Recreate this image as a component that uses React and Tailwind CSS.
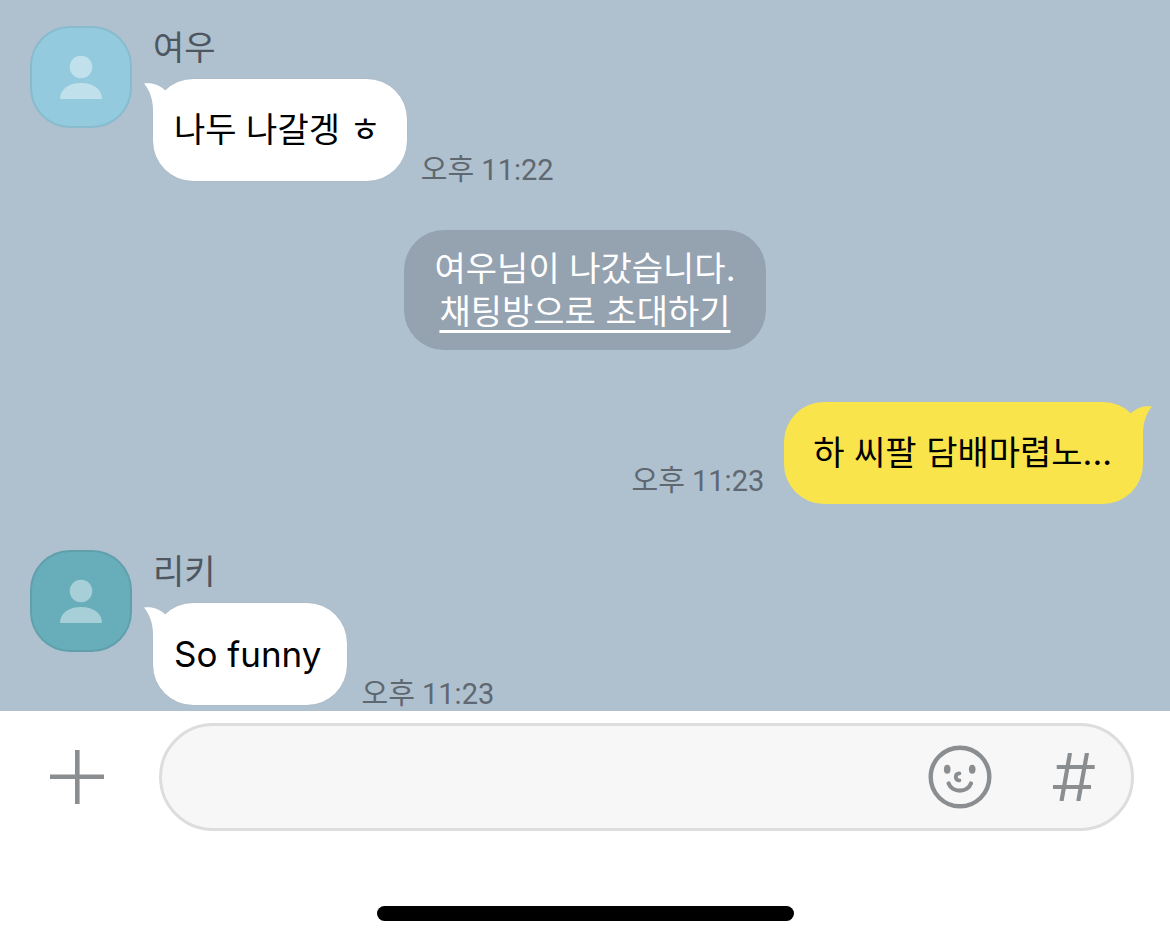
import clsx from 'clsx';

const messages = [
  { id: 1, type: 'incoming', name: '여우', text: '나두 나갈겡 ㅎ', time: '오후 11:22', avatar: 'bg-[#93cade]' },
  { id: 2, type: 'system', text: '여우님이 나갔습니다.', link: '채팅방으로 초대하기' },
  { id: 3, type: 'outgoing', text: '하 씨팔 담배마렵노...', time: '오후 11:23' },
  { id: 4, type: 'incoming', name: '리키', text: 'So funny', lang: 'en', time: '오후 11:23', avatar: 'bg-[#68adba]' },
];

function Avatar({ color }) {
  return (
    <div className={clsx('size-[102px] shrink-0 rounded-[40px] border-2 border-black/7', color)}>
      <svg viewBox="0 0 98 98" className="size-full" fill="#fff" fillOpacity="0.42" aria-hidden="true">
        <circle cx="49" cy="39" r="11.3" />
        <path d="M28 71 C28 61 37 55 49 55 C61 55 70 61 70 71 Z" />
      </svg>
    </div>
  );
}

function Tail({ className }) {
  return (
    <svg viewBox="0 0 30 36" className={clsx('absolute top-1 h-9 w-[30px]', className)} fill="currentColor" aria-hidden="true">
      <path d="M0 0.6 C7 -0.8 15 1.5 21 7.2 L30 20 L9 36 L9 28 C9 17 6 8 0 0.6 Z" />
    </svg>
  );
}

function Time({ children, className }) {
  return (
    <time
      className={clsx(
        "font-['Roboto','Noto_Sans_CJK_KR',sans-serif] text-[29px] leading-[22px] whitespace-nowrap text-[#5f6871]",
        className,
      )}
    >
      {children}
    </time>
  );
}

function Incoming({ message }) {
  return (
    <article className="flex gap-[21px] pl-[30px]">
      <Avatar color={message.avatar} />
      <div>
        <h2 className="mb-[9px] text-[34px] leading-[44px] text-[#4e565f]">{message.name}</h2>
        <div className="flex items-end gap-[14px]">
          <div className="relative rounded-[40px] bg-white py-7 pr-[26px] pl-[21px] text-black shadow-[0_0_1px_rgba(0,0,0,0.15)]">
            <Tail className="-left-[9px] text-white" />
            {/* latin text runs a touch larger so it balances with hangul */}
            <p
              lang={message.lang}
              className={clsx('relative leading-[46px]', message.lang === 'en' ? 'text-[35px]' : 'text-[34px]')}
            >
              {message.text}
            </p>
          </div>
          <Time>{message.time}</Time>
        </div>
      </div>
    </article>
  );
}

function Outgoing({ message }) {
  return (
    <article className="flex items-end justify-end gap-5 pr-[27px]">
      <Time className="mb-3">{message.time}</Time>
      <div className="relative rounded-[40px] bg-[#f9e54b] py-7 pr-[31px] pl-[29px] text-black">
        <Tail className="-right-[9px] -scale-x-100 text-[#f9e54b]" />
        <p className="relative text-[34px] leading-[46px]">{message.text}</p>
      </div>
    </article>
  );
}

function SystemNotice({ message }) {
  return (
    <div className="mx-auto mt-[49px] mb-[52px] rounded-[40px] bg-[#95a2b0] px-[31px] py-[17px] text-center text-[34px] leading-[43px] text-white">
      <p>{message.text}</p>
      <p>
        <a href="#invite" className="underline decoration-[3px] underline-offset-[6px] [text-decoration-skip-ink:none]">
          {message.link}
        </a>
      </p>
    </div>
  );
}

function Composer() {
  return (
    <form className="flex items-center pt-3 pr-9 pl-[50px]" onSubmit={(e) => e.preventDefault()}>
      <button type="button" aria-label="추가" className="shrink-0">
        <svg viewBox="0 0 54 54" className="size-[54px]" stroke="#8b8e91" strokeWidth="4.6" aria-hidden="true">
          <path d="M27.3 0 V54 M0 26.7 H54" />
        </svg>
      </button>
      <div className="ml-[55px] flex h-[108px] flex-1 items-center rounded-full border-[3px] border-[#dcdddd] bg-[#f7f7f7] pr-9">
        <input
          type="text"
          aria-label="메시지 입력"
          className="h-full min-w-0 flex-1 bg-transparent pl-10 text-[34px] text-black outline-none"
        />
        <button type="button" aria-label="이모티콘" className="shrink-0">
          <svg viewBox="0 0 64 64" className="size-16" fill="none" stroke="#8b8e91" strokeLinecap="round" aria-hidden="true">
            <circle cx="32" cy="32" r="29.3" strokeWidth="4.4" />
            <ellipse cx="19.2" cy="24.2" rx="3.3" ry="4.5" fill="#8b8e91" stroke="none" />
            <ellipse cx="44.2" cy="24.2" rx="3.3" ry="4.5" fill="#8b8e91" stroke="none" />
            <path strokeWidth="3.8" d="M31.4 28.4 C26.6 28.8 26.6 35 31.4 35.4" />
            <path strokeWidth="4.2" d="M20.6 38.4 C24 48 39.6 48 43 38.4" />
          </svg>
        </button>
        <button type="button" aria-label="샵검색" className="ml-[61px] shrink-0">
          <svg viewBox="0 0 42 48" className="h-12 w-[42px]" fill="none" stroke="#8b8e91" strokeWidth="4.2" aria-hidden="true">
            <path d="M17 0 L8.5 48 M34 0 L25.3 48 M3.7 14 H41.7 M0 34 H38" />
          </svg>
        </button>
      </div>
    </form>
  );
}

export default function App() {
  return (
    <div className="min-h-screen bg-white font-['Inter','Noto_Sans_CJK_KR',sans-serif]">
      <main className="flex flex-col bg-[#afc0cf] pt-[26px] pb-[6px]">
        {messages.map((m) => {
          if (m.type === 'system') return <SystemNotice key={m.id} message={m} />;
          if (m.type === 'outgoing') return <Outgoing key={m.id} message={m} />;
          return (
            <div key={m.id} className="not-first:mt-[46px]">
              <Incoming message={m} />
            </div>
          );
        })}
      </main>
      <footer>
        <Composer />
        <div className="mx-auto mt-[75px] h-[15px] w-[417px] rounded-full bg-black" />
      </footer>
    </div>
  );
}
